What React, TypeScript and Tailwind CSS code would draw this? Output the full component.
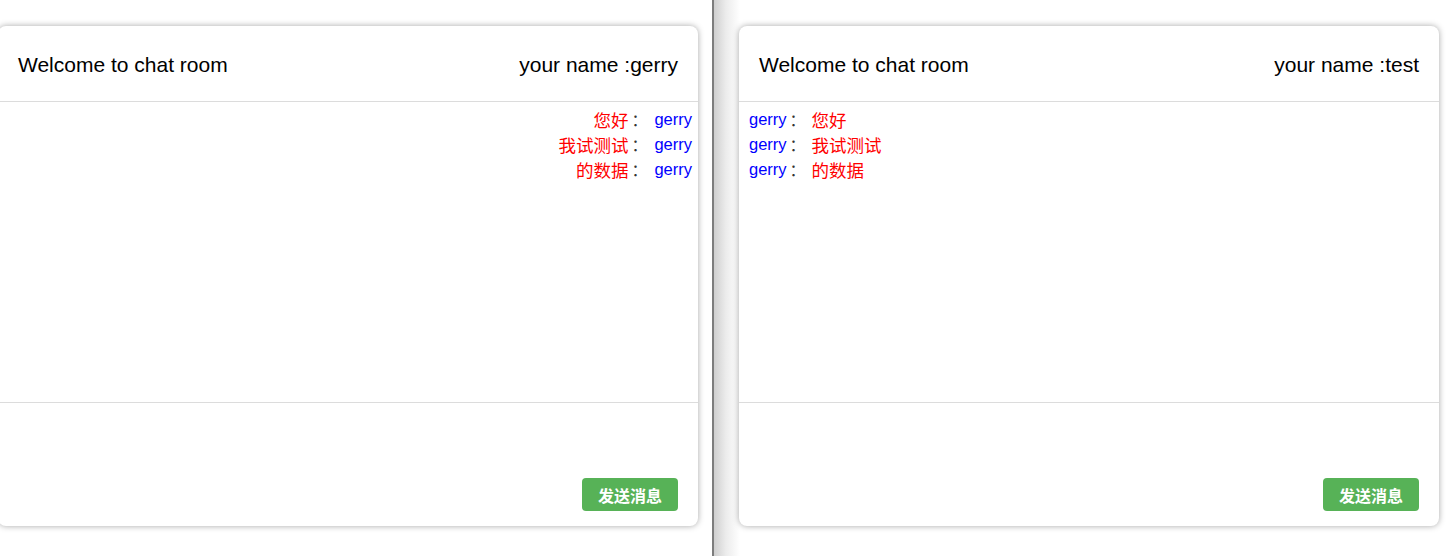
type Msg = { user: string; text: string };

const messages: Msg[] = [
  { user: "gerry", text: "您好" },
  { user: "gerry", text: "我试测试" },
  { user: "gerry", text: "的数据" },
];

const font = {
  fontFamily: '"Liberation Sans", "Noto Sans CJK SC", sans-serif',
};

const cjk = {
  fontFamily: '"Noto Sans CJK SC", sans-serif',
};

function ChatCard({ name, mine }: { name: string; mine: boolean }) {
  return (
    <div className="flex h-[500px] w-[700px] shrink-0 flex-col rounded-[8px] bg-white shadow-[0_0_6px_rgba(0,0,0,0.35)]">
      <div className="flex h-[76px] shrink-0 items-center justify-between border-b border-[#dcdcdc] px-5 pt-[3px] text-[21px] text-black">
        <span>Welcome to chat room</span>
        <span>your name :{name}</span>
      </div>
      <div
        className={`flex h-[300px] shrink-0 flex-col pt-[5px] text-[16.5px] leading-[25px] ${
          mine ? "items-end pr-[6px]" : "items-start pl-[10px]"
        }`}
      >
        {messages.map((m, i) =>
          mine ? (
            <div key={i} className="flex h-[25px] items-center">
              <span className="text-[17.5px] leading-[25px] text-[#ff0000]" style={cjk}>
                {m.text}
              </span>
              <span className="pl-[3px] text-[16px] leading-[25px] text-[#333]" style={cjk}>
                ：
              </span>
              <span className="ml-[7px] leading-[25px] text-[#0000ff]">{m.user}</span>
            </div>
          ) : (
            <div key={i} className="flex h-[25px] items-center">
              <span className="leading-[25px] text-[#0000ff]">{m.user}</span>
              <span className="pl-[3px] text-[16px] leading-[25px] text-[#333]" style={cjk}>
                ：
              </span>
              <span
                className="ml-[6px] text-[17.5px] leading-[25px] text-[#ff0000]"
                style={cjk}
              >
                {m.text}
              </span>
            </div>
          )
        )}
      </div>
      <div className="flex flex-1 items-end justify-end border-t border-[#dcdcdc] px-5 pb-[15px]">
        <button
          type="button"
          className="h-[33px] w-[96px] rounded-[4px] bg-[#57b257] text-[16px] font-bold leading-none text-white"
          style={cjk}
        >
          发送消息
        </button>
      </div>
    </div>
  );
}

export default function App() {
  return (
    <div className="flex h-[556px] w-[1453px] overflow-hidden bg-white" style={font}>
      <div className="flex w-[712px] shrink-0 overflow-hidden pt-[26px]">
        <div className="-ml-[2px]">
          <ChatCard name="gerry" mine />
        </div>
      </div>
      <div className="w-[2px] shrink-0 bg-[#7d7d7d]" />
      <div className="flex flex-1 bg-[linear-gradient(to_right,#cfcfcf,#ececec_12px,#ffffff_26px)] pl-[25px] pt-[26px]">
        <ChatCard name="test" mine={false} />
      </div>
    </div>
  );
}
